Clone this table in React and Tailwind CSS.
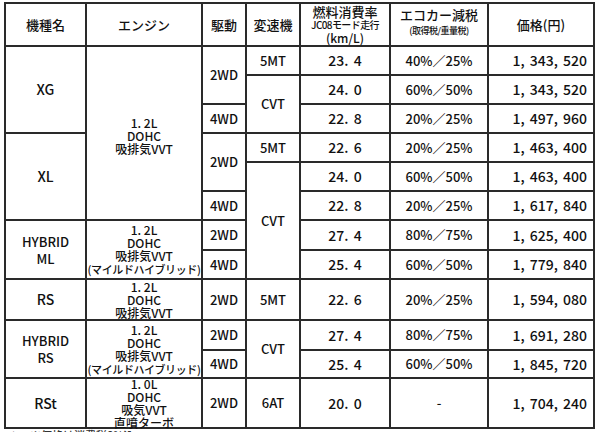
const cells = [
  // header
  { t: '機種名', c: 'text-[13px]' },
  { t: 'エンジン', c: 'text-[13px]' },
  { t: '駆動', c: 'text-[13px]' },
  { t: '変速機', c: 'text-[13px]' },
  { h: 'fuel' },
  { h: 'eco' },
  { t: '価格(円)', c: 'text-[13px]' },
  // XG
  { t: 'XG', c: 'row-span-3 text-[14px]' },
  { e: ['1. 2L', 'DOHC', '吸排気VVT'], c: 'row-span-6 pt-[4px]' },
  { t: '2WD', c: 'row-span-2' },
  { t: '5MT' },
  { v: ['23. 4', '40%／25%', '1, 343, 520'] },
  { t: 'CVT', c: 'row-span-2' },
  { v: ['24. 0', '60%／50%', '1, 343, 520'] },
  { t: '4WD' },
  { v: ['22. 8', '20%／25%', '1, 497, 960'] },
  // XL
  { t: 'XL', c: 'row-span-3 text-[14px]' },
  { t: '2WD', c: 'row-span-2' },
  { t: '5MT' },
  { v: ['22. 6', '20%／25%', '1, 463, 400'] },
  { t: 'CVT', c: 'row-span-4' },
  { v: ['24. 0', '60%／50%', '1, 463, 400'] },
  { t: '4WD' },
  { v: ['22. 8', '20%／25%', '1, 617, 840'] },
  // HYBRID ML
  { t: ['HYBRID', 'ML'], c: 'row-span-2 leading-[17px]' },
  { e: ['1. 2L', 'DOHC', '吸排気VVT', '(マイルドハイブリッド)'], c: 'row-span-2' },
  { t: '2WD' },
  { v: ['27. 4', '80%／75%', '1, 625, 400'] },
  { t: '4WD' },
  { v: ['25. 4', '60%／50%', '1, 779, 840'] },
  // RS
  { t: 'RS', c: 'text-[14px]' },
  { e: ['1. 2L', 'DOHC', '吸排気VVT'] },
  { t: '2WD' },
  { t: '5MT' },
  { v: ['22. 6', '20%／25%', '1, 594, 080'] },
  // HYBRID RS
  { t: ['HYBRID', 'RS'], c: 'row-span-2 leading-[17px]' },
  { e: ['1. 2L', 'DOHC', '吸排気VVT', '(マイルドハイブリッド)'], c: 'row-span-2' },
  { t: '2WD' },
  { t: 'CVT', c: 'row-span-2' },
  { v: ['27. 4', '80%／75%', '1, 691, 280'] },
  { t: '4WD' },
  { v: ['25. 4', '60%／50%', '1, 845, 720'] },
  // RSt
  { t: 'RSt', c: 'text-[14px]' },
  { e: ['1. 0L', 'DOHC', '吸気VVT', '直噴ターボ'], c: 'leading-[12px]' },
  { t: '2WD' },
  { t: '6AT' },
  { v: ['20. 0', '-', '1, 704, 240'] },
]

function Cell({ cell }) {
  if (cell.h === 'fuel') {
    return (
      <div className="bg-white flex flex-col items-center justify-center leading-[13px]">
        <span className="text-[13px]">燃料消費率</span>
        <span className="text-[10px] tracking-[-0.6px]">JC08モード走行</span>
        <span className="text-[12px]">(km/L)</span>
      </div>
    )
  }
  if (cell.h === 'eco') {
    return (
      <div className="bg-white flex flex-col items-center justify-center leading-[16px] pb-[4px]">
        <span className="text-[13px]">エコカー減税</span>
        <span className="text-[9px] tracking-[-0.5px]">(取得税/重量税)</span>
      </div>
    )
  }
  if (cell.e) {
    return (
      <div className={`bg-white flex flex-col items-center justify-center text-[12px] leading-[13px] ${cell.c || ''}`}>
        {cell.e.map((l, i) => (
          <span key={i} className={l.startsWith('(') ? 'text-[11px] tracking-[-0.4px] whitespace-nowrap leading-[14px]' : 'whitespace-pre'}>{l}</span>
        ))}
      </div>
    )
  }
  if (cell.v) {
    return (
      <>
        <div className="bg-white flex items-center justify-center text-[14px] whitespace-pre [word-spacing:2px]">{cell.v[0]}</div>
        <div className="bg-white flex items-center justify-center text-[13px]">{cell.v[1]}</div>
        <div className="bg-white flex items-center justify-end pr-[6px] text-[14px] whitespace-pre [word-spacing:2px]">{cell.v[2]}</div>
      </>
    )
  }
  const lines = Array.isArray(cell.t) ? cell.t : [cell.t]
  return (
    <div className={`bg-white flex flex-col items-center justify-center text-[13px] ${cell.c || ''}`}>
      {lines.map((l, i) => <span key={i}>{l}</span>)}
    </div>
  )
}

export default function App() {
  return (
    <div className="w-[600px] h-[432px] overflow-hidden bg-white text-[#111] font-medium [font-family:'Noto_Sans_CJK_JP','Noto_Sans_CJK_SC',sans-serif]">
      <div className="ml-[4px] mt-[2px] w-fit grid grid-cols-[79px_114px_42px_52px_88px_96px_104px] grid-rows-[41px_27px_27px_27px_27px_27px_27px_28px_27px_39px_28px_26px_48px] gap-[2px] p-[2px] bg-[#2a2a2a]">
        {cells.map((c, i) => <Cell key={i} cell={c} />)}
      </div>
      <p className="ml-[8px] text-[11px] leading-[12px] text-[#333]">＊　※価格は消費税8%込</p>
    </div>
  )
}
